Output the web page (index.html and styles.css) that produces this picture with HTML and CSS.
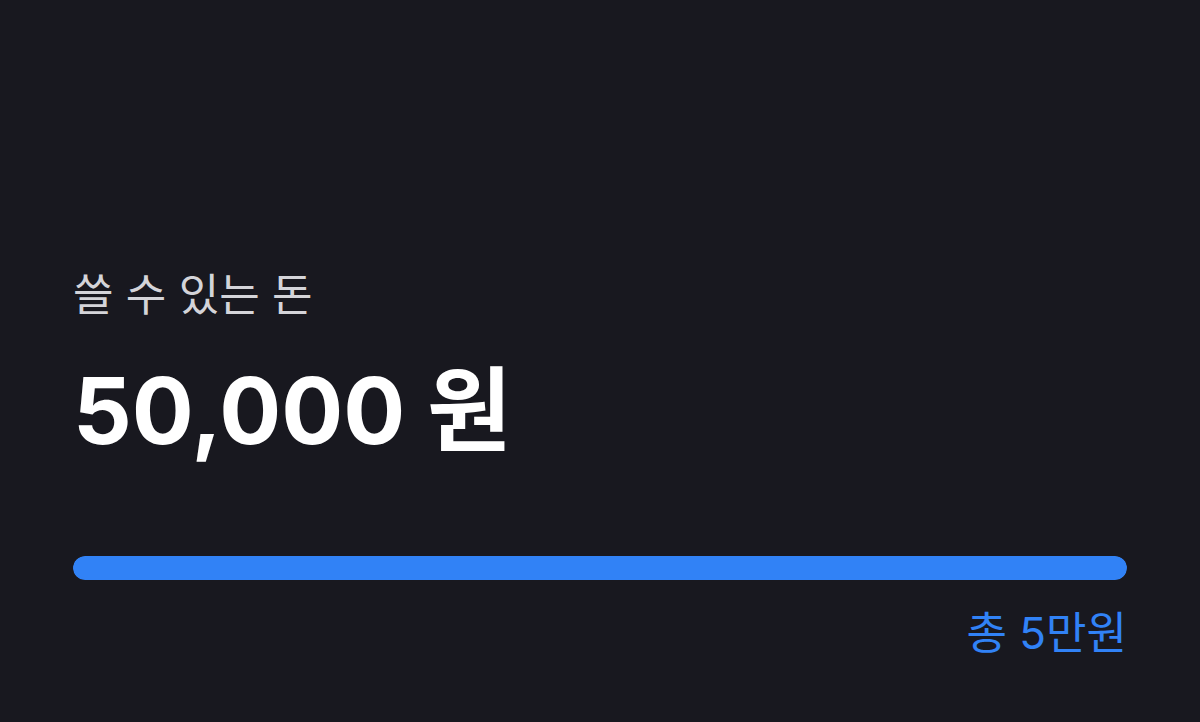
FILE: index.html
```html
<!DOCTYPE html>
<html lang="ko">
<head>
    <meta charset="UTF-8">
    <meta name="viewport" content="width=device-width, initial-scale=1.0">
    <title>쓸 수 있는 돈</title>
    <link rel="stylesheet" href="styles.css">
</head>
<body>
    <div class="budget">
        <p class="budget-label">쓸 수 있는 돈</p>
        <p class="budget-amount">50,000 원</p>
        <div class="budget-bar">
            <div class="budget-fill" style="width: 100%"></div>
        </div>
        <p class="budget-total">총 5만원</p>
    </div>
</body>
</html>
```

FILE: styles.css
```css
body {
    font-family: Inter, "Noto Sans CJK KR", sans-serif;
    background-color: #18181f;
    color: #fff;
    margin: 0;
    padding: 0;
}

.budget {
    padding: 262px 73px 0;
}

.budget-label {
    margin: 0;
    font-size: 44px;
    line-height: 66px;
    color: #d4d4d9;
}

.budget-amount {
    margin: 28px 0 0;
    font-size: 92px;
    font-weight: 700;
    line-height: 110px;
    color: #fff;
}

.budget-bar {
    margin-top: 90px;
    height: 24px;
    border-radius: 12px;
    background-color: #2c2c35;
    overflow: hidden;
}

.budget-fill {
    height: 100%;
    border-radius: 12px;
    background-color: #3182f6;
}

.budget-total {
    margin: 20px 0 0;
    text-align: right;
    font-size: 44px;
    line-height: 66px;
    color: #3182f6;
}
```
